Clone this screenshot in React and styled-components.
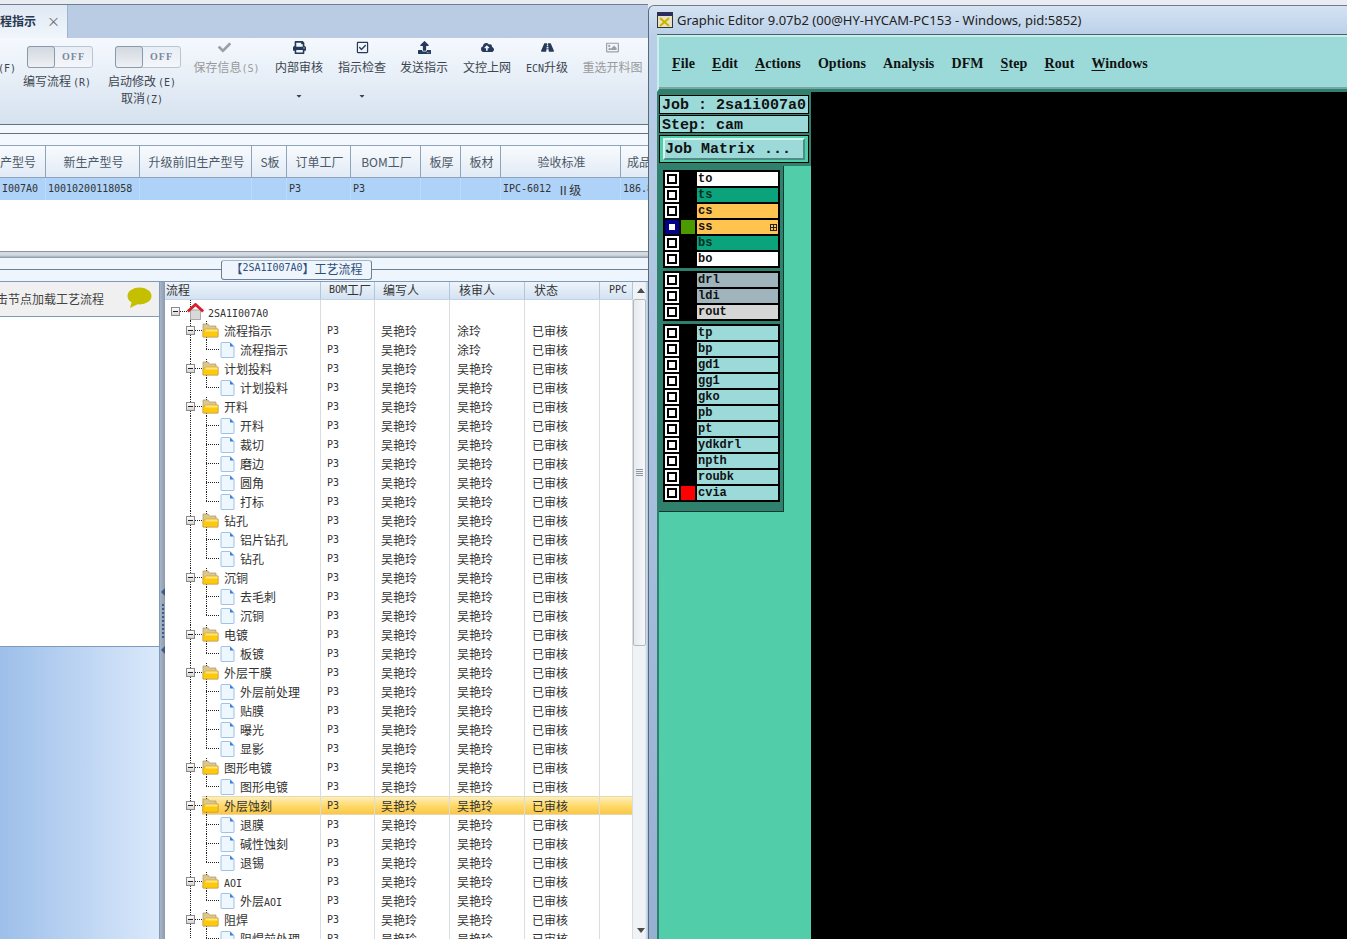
import React from "react";
import styled, { createGlobalStyle } from "styled-components";
import { FaCheck, FaPrint, FaRegCheckSquare, FaUpload, FaCloudUploadAlt, FaRoad, FaRegImage, FaCaretDown } from "react-icons/fa";

const GlobalStyle = createGlobalStyle`
  html, body { margin: 0; padding: 0; background: #e9edf2; }
  * { box-sizing: border-box; }
  body { font-family: "Noto Sans CJK SC", "Liberation Sans", sans-serif; font-size: 12px; color: #333; }
`;

const Desk = styled.div`
  width: 1347px;
  height: 939px;
  display: flex;
  overflow: hidden;
  background: #e9edf2;
`;

const LeftApp = styled.div`
  width: 648px;
  flex: none;
  display: flex;
  flex-direction: column;
  overflow: hidden;
  padding-top: 4px;
`;

const M = styled.span`
  font-family: "DejaVu Sans Mono", "Liberation Mono", monospace;
  font-size: 10px;
  line-height: 1;
  margin-left: ${(p) => p.$gap || 0}px;
`;

const TabStrip = styled.div`
  height: 34px;
  flex: none;
  background: #b9cce4;
  border-top: 1px solid #6f7f91;
  display: flex;
`;

const Tab = styled.div`
  width: 68px;
  display: flex;
  align-items: center;
  justify-content: space-between;
  padding: 0 7px 2px 0;
  background: linear-gradient(#dfe8f3, #f1f6fc);
  border-right: 1px solid #9fb4cf;
  font-weight: 700;
  color: #27384f;
  i { font-style: normal; font-weight: 400; color: #666; font-size: 13px; }
`;

const Ribbon = styled.div`
  height: 87px;
  flex: none;
  display: grid;
  grid-template-columns: 14px 86px 84px 81px 68px 58px 66px 60px 60px 71px;
  background: linear-gradient(#f5f9fe, #d6e2ef);
  border-bottom: 1px solid #66727f;
`;

const Cell = styled.div`
  display: flex;
  flex-direction: column;
  align-items: center;
  white-space: nowrap;
  color: ${(p) => (p.$off ? "#9a9a9a" : "#3d4650")};
`;

const ToolIcon = styled.div`
  height: 18px;
  display: flex;
  align-items: center;
  justify-content: center;
  font-size: 13px;
  color: ${(p) => (p.$off ? "#9aa0a6" : "#253a5a")};
`;

const ToolText = styled.div`
  line-height: 18px;
  margin-top: 2px;
  padding-left: ${(p) => p.$nudge || 0}px;
`;

const FLabel = styled.div`
  line-height: 18px;
  margin-top: 20px;
`;

const Caret = styled.div`
  margin-top: 15px;
  height: 12px;
  font-size: 8px;
  line-height: 12px;
  color: #3d4650;
`;

const Toggle = styled.div`
  width: 66px;
  height: 22px;
  margin: 8px 0 0 ${(p) => p.$shift}px;
  display: flex;
  flex: none;
  border: 1px solid #bac5d1;
  border-radius: 3px;
  background: linear-gradient(#e8eef5, #f3f6fa);
  b {
    flex: 1;
    text-align: center;
    font: 700 10px/19px "Liberation Serif", serif;
    letter-spacing: 1px;
    color: #7789a0;
  }
`;

const Knob = styled.div`
  width: 28px;
  margin: -1px 0 -1px -1px;
  border: 1px solid #8c99a8;
  border-radius: 3px;
  background: linear-gradient(#d3d9e0, #edf0f4);
`;

const ToggleLabel = styled.div`
  line-height: 17px;
  margin-top: 4px;
  text-align: center;
`;

const Gap = styled.div`
  height: 9px;
  flex: none;
  background: #f3f8fe;
  border-bottom: 1px solid #66727f;
`;

const Spacer = styled.div`
  height: 11px;
  flex: none;
  background: #f3f8fe;
`;

const gridCols = "46px 94px 112px 35px 64px 70px 40px 40px 120px 40px";

const HeadRow = styled.div`
  height: 33px;
  flex: none;
  display: grid;
  grid-template-columns: ${gridCols};
  background: linear-gradient(#f8fbfe, #e1eaf5);
  border-top: 1px solid #8fa3ba;
  border-bottom: 1px solid #8fa3ba;
`;

const HeadCell = styled.div`
  display: flex;
  align-items: center;
  justify-content: ${(p) => (p.$clip ? "flex-end" : "center")};
  padding: ${(p) => (p.$clip ? "0 9px 0 0" : "0 0 0 2px")};
  border-right: 1px solid #8fa3ba;
  white-space: nowrap;
  overflow: hidden;
  color: #4c5866;
`;

const DataRow = styled.div`
  height: 22px;
  flex: none;
  display: grid;
  grid-template-columns: ${gridCols};
  background: #aed2f8;
  box-shadow: 0 1px 0 #e4effb;
`;

const DataCell = styled.div`
  display: flex;
  align-items: center;
  padding-left: 2px;
  white-space: pre;
  overflow: hidden;
  border-right: 1px solid #bcdafa;
  color: #333;
`;

const WhiteArea = styled.div`
  height: 51px;
  flex: none;
  background: #fff;
`;

const HSplit = styled.div`
  height: 7px;
  flex: none;
  border-top: 1px solid #8a96a4;
  background: linear-gradient(#d3dae2 0 50%, #8a96a4 100%);
`;

const GroupBar = styled.div`
  height: 24px;
  flex: none;
  padding: 2px 0 0 221px;
  background: linear-gradient(#eef5fd 0 11px, #6f7f91 11px 12px, #eef5fd 12px);
  border-bottom: 1px solid #7f9abb;
`;

const GroupTab = styled.div`
  width: 151px;
  height: 20px;
  display: flex;
  align-items: center;
  justify-content: center;
  padding-bottom: 4px;
  background: #eef5fd;
  border: 1px solid #6f7f91;
  border-top-color: #a9b6c5;
  border-radius: 3px;
  white-space: nowrap;
  color: #2d4f78;
`;

const Lower = styled.div`
  flex: 1;
  min-height: 0;
  display: flex;
`;

const SidePanel = styled.div`
  width: 160px;
  flex: none;
  display: flex;
  flex-direction: column;
  border-right: 1px solid #7f9abb;
  overflow: hidden;
`;

const SideHead = styled.div`
  height: 35px;
  flex: none;
  display: flex;
  align-items: center;
  justify-content: space-between;
  padding: 0 7px 2px 0;
  background: #f0f0f0;
  border-bottom: 1px solid #7f9abb;
  white-space: nowrap;
  color: #444;
  span { margin-left: -4px; }
`;

const SideWhite = styled.div`
  height: 330px;
  flex: none;
  background: #fff;
  border-bottom: 1px solid #7f9abb;
`;

const SideBlue = styled.div`
  flex: 1;
  background: linear-gradient(90deg, #9dbfea, #dbe9fb);
`;

const VSplit = styled.div`
  width: 5px;
  flex: none;
  display: flex;
  flex-direction: column;
  align-items: center;
  padding-top: 306px;
  background: linear-gradient(90deg, #a8b5c6, #8a9ab0);
`;

const SplitArrow = styled.div`
  width: 0;
  height: 0;
  border-top: 4px solid transparent;
  border-bottom: 4px solid transparent;
  border-right: 4px solid #3a5a88;
`;

const SplitDots = styled.div`
  width: 2px;
  height: 34px;
  margin: 8px 0;
  background: repeating-linear-gradient(#3a5a88 0 2px, transparent 2px 4px);
`;

const TreeMain = styled.div`
  flex: 1;
  min-width: 0;
  display: flex;
  flex-direction: column;
  background: #fff;
  overflow: hidden;
`;

const treeCols = "156px 54px 75px 75px 75px 33px";

const TreeHead = styled.div`
  height: 18px;
  flex: none;
  display: grid;
  grid-template-columns: ${treeCols};
  background: linear-gradient(#edf4fb, #d3e2f2);
  border-bottom: 1px solid #c4d2e2;
`;

const TreeHeadCell = styled.div`
  display: flex;
  align-items: center;
  padding: 0 0 2px ${(p) => p.$pad}px;
  border-right: 1px solid #b3c5da;
  white-space: nowrap;
  overflow: hidden;
  color: #333;
`;

const TreeBody = styled.div`
  flex: 1;
  min-height: 0;
  overflow: hidden;
`;

const Row = styled.div`
  height: ${(p) => (p.$root ? 21 : 19)}px;
  display: grid;
  grid-template-columns: ${treeCols};
  ${(p) =>
    p.$selected &&
    `background: linear-gradient(#e9d9a8 0 1px, #fdeebc 1px, #ffd964 55%, #f8c64c 95%, #e9d9a8 95%) no-repeat 37px 0 / calc(100% - 37px) 100%;`}
`;

const guide = (x, stop) =>
  `repeating-linear-gradient(#222 0 1px, transparent 1px 2px) no-repeat ${x}px 0 / 1px ${stop}`;

const TreeCell = styled.div`
  display: flex;
  align-items: center;
  padding-left: ${(p) => p.$indent}px;
  padding-top: ${(p) => (p.$root ? 2 : 0)}px;
  border-right: 1px solid #d9dde2;
  white-space: nowrap;
  color: #333;
  background: ${(p) => p.$guides};
`;

const ValueCell = styled.div`
  display: flex;
  align-items: center;
  padding-left: ${(p) => p.$pad}px;
  border-right: 1px solid #d9dde2;
  white-space: nowrap;
  color: #333;
`;

const Expander = styled.div`
  width: 9px;
  height: 9px;
  flex: none;
  position: relative;
  border: 1px solid #8a8a8a;
  background: linear-gradient(#fff, #d5d5d5);
  &::after {
    content: "";
    position: absolute;
    left: 1px;
    right: 1px;
    top: 3px;
    height: 1px;
    background: #222;
  }
`;

const Dots = styled.div`
  width: ${(p) => p.$w}px;
  height: 1px;
  flex: none;
  background: repeating-linear-gradient(90deg, #222 0 1px, transparent 1px 2px);
`;

const NodeText = styled.span`
  margin-left: ${(p) => p.$gap}px;
`;

const ScrollBar = styled.div`
  width: 15px;
  flex: none;
  display: flex;
  flex-direction: column;
  background: linear-gradient(90deg, #f0f3f6 0 80%, #a9c2e0);
`;

const ScrollButton = styled.div`
  height: 17px;
  flex: none;
  display: flex;
  align-items: center;
  justify-content: center;
  &::after {
    content: "";
    border-left: 4px solid transparent;
    border-right: 4px solid transparent;
    ${(p) => (p.$down ? "border-top" : "border-bottom")}: 5px solid #4d4d4d;
  }
`;

const ScrollThumb = styled.div`
  height: 347px;
  flex: none;
  margin-right: 2px;
  display: flex;
  align-items: center;
  justify-content: center;
  background: linear-gradient(90deg, #e6eaef, #f6f8fa);
  border: 1px solid #b5b9be;
  border-radius: 2px;
  i {
    width: 7px;
    height: 7px;
    background: repeating-linear-gradient(#8e98a3 0 1px, transparent 1px 2px);
  }
`;

const ScrollTrack = styled.div`
  flex: 1;
`;

/* right hand window */
const GraphicWindow = styled.div`
  flex: 1;
  min-width: 0;
  margin-top: 5px;
  display: flex;
  flex-direction: column;
  border-top: 1px solid #6d7c8c;
  border-left: 1px solid #5a6878;
  border-top-left-radius: 6px;
  background: linear-gradient(#d5e3f2, #b9cfe8 30px, #96b0d2);
  padding-left: 8px;
  overflow: hidden;
`;

const TitleBar = styled.div`
  height: 28px;
  flex: none;
  display: flex;
  align-items: center;
  gap: 4px;
  font: 13px "Noto Sans", sans-serif;
  color: #222;
  white-space: nowrap;
`;

const Client = styled.div`
  flex: 1;
  min-height: 0;
  display: flex;
  flex-direction: column;
  background: #000;
  border-top: 1px solid #47625f;
`;

const MenuBar = styled.div`
  height: 57px;
  flex: none;
  display: flex;
  align-items: center;
  gap: 17px;
  padding: 2px 0 0 13px;
  background: #9bdad9;
  border-top: 2px solid #c9eeec;
  border-left: 2px solid #c9eeec;
  border-bottom: 3px solid #2f806c;
  box-shadow: inset 0 -2px 0 #7ba5a4;
  font: 700 14px "Liberation Serif", serif;
  letter-spacing: 0.1px;
  color: #111;
  u { text-underline-offset: 2px; }
`;

const Work = styled.div`
  flex: 1;
  min-height: 0;
  display: flex;
`;

const LeftColumn = styled.div`
  width: 154px;
  flex: none;
  display: flex;
  flex-direction: column;
  background: #2f806c;
  padding: 3px 0 0 2px;
`;

const InfoLine = styled.div`
  width: 150px;
  height: ${(p) => p.$h}px;
  flex: none;
  margin-bottom: 1px;
  padding: 2px 0 0 2px;
  background: #9bdad9;
  border: 1px solid #000;
  font: 700 15px/15px "Liberation Mono", monospace;
  white-space: pre;
  color: #111;
`;

const MatrixGroup = styled.div`
  width: 150px;
  height: 28px;
  flex: none;
  margin-top: 1px;
  padding: 2px 3px;
  border: 1px solid #000;
  background: #52cdaa;
`;

const MatrixButton = styled.div`
  height: 22px;
  background: #9bdad9;
  border: 2px solid;
  border-color: #d5f3f1 #4f8d84 #4f8d84 #d5f3f1;
  font: 700 15px/20px "Liberation Mono", monospace;
  white-space: pre;
  color: #111;
`;

const Lowerside = styled.div`
  flex: 1;
  min-height: 0;
  margin-top: 3px;
  display: flex;
  flex-direction: column;
  align-items: flex-start;
  background: #52cdaa;
`;

const Frame = styled.div`
  width: 125px;
  flex: none;
  display: flex;
  flex-direction: column;
  gap: 3px;
  padding: 4px 3px 9px 4px;
  background: #2f806c;
  border-right: 1px solid #10382e;
  border-bottom: 1px solid #10382e;
`;

const LayerGroup = styled.div`
  display: flex;
  flex-direction: column;
  gap: 2px;
  padding: 2px;
  background: #000;
`;

const LayerRow = styled.div`
  height: 14px;
  display: grid;
  grid-template-columns: 14px 14px 1fr;
  gap: 2px;
`;

const Check = styled.div`
  padding: 2px;
  background: ${(p) => (p.$active ? "#00008b" : "#fff")};
  div {
    width: 10px;
    height: 10px;
    border: 2px solid ${(p) => (p.$active ? "#00008b" : "#000")};
    background: #fff;
  }
`;

const Swatch = styled.div`
  background: ${(p) => p.$color || "#000"};
`;

const LayerName = styled.div`
  display: flex;
  align-items: center;
  justify-content: space-between;
  padding: 1px 1px 0 1px;
  background: ${(p) => p.$color};
  font: 700 12px/13px "Liberation Mono", monospace;
  color: ${(p) => p.$ink || "#111"};
`;

const Canvas = styled.div`
  flex: 1;
  background: #000;
`;

const Folder = () => (
  <svg width="17" height="15" viewBox="0 0 17 15">
    <path d="M1 14 V1 H6 L7.5 3 H14 V6 H16 V14Z" fill="#dcc88f" stroke="#a99560" strokeWidth="0.7" />
    <path d="M4 6 H16 V14 H1 V8Z" fill="#ffc90a" stroke="#c9a24a" strokeWidth="0.7" />
    <rect x="3.5" y="6.5" width="12" height="2" fill="#ffe680" />
  </svg>
);

const Doc = () => (
  <svg width="15" height="16" viewBox="0 0 15 16">
    <path d="M1.5 .5 H10 L14 4.5 V15 Q14 15.5 13 15.5 H2 Q1 15.5 1 15 V1 Z" fill="#eef6fe" stroke="#9cc2e8" />
    <path d="M10 .5 L14 4.5 H10Z" fill="#3b7fdb" />
  </svg>
);

const House = () => (
  <svg width="17" height="17" viewBox="0 0 17 17">
    <rect x="3.5" y="7" width="10" height="9.5" fill="#d8d8d8" stroke="#aaa" />
    <path d="M.8 8.5 L8.5 1.5 L16.2 8.5" fill="none" stroke="#d8202a" strokeWidth="2.8" />
  </svg>
);

const Bubble = () => (
  <svg width="25" height="22" viewBox="0 0 25 22">
    <ellipse cx="12.5" cy="9" rx="12" ry="8.5" fill="#c4bf00" />
    <path d="M5 14 L3 21 L13 16Z" fill="#c4bf00" />
  </svg>
);

const WinIcon = () => (
  <svg width="16" height="16" viewBox="0 0 16 16">
    <rect x=".5" y=".5" width="15" height="15" fill="#e9e3c4" stroke="#333" />
    <rect x="1" y="1" width="14" height="3" fill="#2a2a6a" />
    <path d="M3 6 L12 14 M12 6 L3 14" stroke="#c9b400" strokeWidth="2" />
  </svg>
);

const LayerMark = () => (
  <svg width="7" height="7" viewBox="0 0 7 7">
    <rect x=".5" y=".5" width="6" height="6" fill="none" stroke="#222" />
    <path d="M3.5 1 V6 M1 3.5 H6" stroke="#222" />
  </svg>
);

const tableHead = [
  ["产型号", true],
  ["新生产型号"],
  ["升级前旧生产型号"],
  ["S板"],
  ["订单工厂"],
  ["BOM工厂"],
  ["板厚"],
  ["板材"],
  ["验收标准"],
  ["成品", true],
];

const tools = [
  { icon: <FaCheck />, text: <>保存信息<M>(S)</M></>, off: true, nudge: 4 },
  { icon: <FaPrint />, text: "内部审核", caret: true },
  { icon: <FaRegCheckSquare />, text: "指示检查", caret: true },
  { icon: <FaUpload />, text: "发送指示" },
  { icon: <FaCloudUploadAlt />, text: "文控上网" },
  { icon: <FaRoad />, text: <><M>ECN</M>升级</> },
  { icon: <FaRegImage />, text: "重选开料图", off: true },
];

const tree = [
  ["流程指示", ["流程指示"], "涂玲"],
  ["计划投料", ["计划投料"]],
  ["开料", ["开料", "裁切", "磨边", "圆角", "打标"]],
  ["钻孔", ["铝片钻孔", "钻孔"]],
  ["沉铜", ["去毛刺", "沉铜"]],
  ["电镀", ["板镀"]],
  ["外层干膜", ["外层前处理", "贴膜", "曝光", "显影"]],
  ["图形电镀", ["图形电镀"]],
  ["外层蚀刻", ["退膜", "碱性蚀刻", "退锡"]],
  ["AOI", ["外层AOI"]],
  ["阻焊", ["阻焊前处理"]],
];

const nodeLabel = (s) => {
  const m = s.match(/^([^A-Z]*)([A-Z]+)$/);
  return m ? <>{m[1]}<M>{m[2]}</M></> : s;
};

const Values = ({ checker = "吴艳玲" }) => (
  <>
    <ValueCell $pad={6}><M>P3</M></ValueCell>
    <ValueCell $pad={6}>吴艳玲</ValueCell>
    <ValueCell $pad={7}>{checker}</ValueCell>
    <ValueCell $pad={7}>已审核</ValueCell>
    <ValueCell $pad={0} />
  </>
);

const TreeRows = () => (
  <>
    <Row $root>
      <TreeCell $root $indent={6} $guides={guide(25, "100%")}>
        <Expander />
        <Dots $w={7} />
        <House />
        <NodeText $gap={4}><M>2SA1I007A0</M></NodeText>
      </TreeCell>
      <ValueCell $pad={0} />
      <ValueCell $pad={0} />
      <ValueCell $pad={0} />
      <ValueCell $pad={0} />
      <ValueCell $pad={0} />
    </Row>
    {tree.map(([name, kids, checker]) => (
      <React.Fragment key={name}>
        <Row $selected={name === "外层蚀刻"}>
          <TreeCell $indent={21} $guides={`${guide(25, "100%")}, ${guide(41, "100%")}`}>
            <Expander />
            <Dots $w={7} />
            <Folder />
            <NodeText $gap={5}>{nodeLabel(name)}</NodeText>
          </TreeCell>
          <Values checker={checker} />
        </Row>
        {kids.map((kid, i) => (
          <Row key={kid + i}>
            <TreeCell
              $indent={41}
              $guides={`${guide(25, "100%")}, ${guide(41, i === kids.length - 1 ? "50%" : "100%")}`}
            >
              <Dots $w={14} />
              <Doc />
              <NodeText $gap={5}>{nodeLabel(kid)}</NodeText>
            </TreeCell>
            <Values checker={checker} />
          </Row>
        ))}
      </React.Fragment>
    ))}
  </>
);

const teal = "#9bdad9";
const layers = [
  [
    { name: "to", color: "#fff" },
    { name: "ts", color: "#0aa37c", ink: "#042e23" },
    { name: "cs", color: "#fec44f" },
    { name: "ss", color: "#fec44f", active: true, swatch: "#4a9a00", mark: true },
    { name: "bs", color: "#0aa37c", ink: "#042e23" },
    { name: "bo", color: "#fff" },
  ],
  [
    { name: "drl", color: "#9fb4bd" },
    { name: "ldi", color: "#9fb4bd" },
    { name: "rout", color: "#d6d6d6" },
  ],
  [
    { name: "tp", color: teal },
    { name: "bp", color: teal },
    { name: "gd1", color: teal },
    { name: "gg1", color: teal },
    { name: "gko", color: teal },
    { name: "pb", color: teal },
    { name: "pt", color: teal },
    { name: "ydkdrl", color: teal },
    { name: "npth", color: teal },
    { name: "roubk", color: teal },
    { name: "cvia", color: teal, swatch: "#fe0000" },
  ],
];

export default function App() {
  return (
    <Desk>
      <GlobalStyle />
      <LeftApp>
        <TabStrip>
          <Tab><span>程指示</span><i>×</i></Tab>
        </TabStrip>
        <Ribbon>
          <Cell><FLabel><M>(F)</M></FLabel></Cell>
          <Cell>
            <Toggle $shift={6}><Knob /><b>OFF</b></Toggle>
            <ToggleLabel>编写流程<M $gap={2}>(R)</M></ToggleLabel>
          </Cell>
          <Cell>
            <Toggle $shift={12}><Knob /><b>OFF</b></Toggle>
            <ToggleLabel>启动修改<M $gap={2}>(E)</M><br />取消<M>(Z)</M></ToggleLabel>
          </Cell>
          {tools.map((t, i) => (
            <Cell key={i} $off={t.off}>
              <ToolIcon $off={t.off}>{t.icon}</ToolIcon>
              <ToolText $nudge={t.nudge}>{t.text}</ToolText>
              {t.caret && <Caret><FaCaretDown /></Caret>}
            </Cell>
          ))}
        </Ribbon>
        <Gap />
        <Spacer />
        <HeadRow>
          {tableHead.map(([text, clip]) => (
            <HeadCell key={text} $clip={clip}>{text}</HeadCell>
          ))}
        </HeadRow>
        <DataRow>
          <DataCell><M>I007A0</M></DataCell>
          <DataCell><M>10010200118058</M></DataCell>
          <DataCell />
          <DataCell />
          <DataCell><M>P3</M></DataCell>
          <DataCell><M>P3</M></DataCell>
          <DataCell />
          <DataCell />
          <DataCell><M>IPC-6012 </M>Ⅱ级</DataCell>
          <DataCell><M>186.8</M></DataCell>
        </DataRow>
        <WhiteArea />
        <HSplit />
        <GroupBar>
          <GroupTab>【<M>2SA1I007A0</M>】工艺流程</GroupTab>
        </GroupBar>
        <Lower>
          <SidePanel>
            <SideHead><span>击节点加载工艺流程</span><Bubble /></SideHead>
            <SideWhite />
            <SideBlue />
          </SidePanel>
          <VSplit>
            <SplitArrow />
            <SplitDots />
            <SplitArrow />
          </VSplit>
          <TreeMain>
            <TreeHead>
              <TreeHeadCell $pad={1}>流程</TreeHeadCell>
              <TreeHeadCell $pad={8}><M>BOM</M>工厂</TreeHeadCell>
              <TreeHeadCell $pad={8}>编写人</TreeHeadCell>
              <TreeHeadCell $pad={9}>核审人</TreeHeadCell>
              <TreeHeadCell $pad={9}>状态</TreeHeadCell>
              <TreeHeadCell $pad={9}><M>PPC</M></TreeHeadCell>
            </TreeHead>
            <TreeBody><TreeRows /></TreeBody>
          </TreeMain>
          <ScrollBar>
            <ScrollButton />
            <ScrollThumb><i /></ScrollThumb>
            <ScrollTrack />
            <ScrollButton $down />
          </ScrollBar>
        </Lower>
      </LeftApp>
      <GraphicWindow>
        <TitleBar>
          <WinIcon />
          <span>Graphic Editor 9.07b2 (00@HY-HYCAM-PC153 - Windows, pid:5852)</span>
        </TitleBar>
        <Client>
          <MenuBar>
            <span><u>F</u>ile</span>
            <span><u>E</u>dit</span>
            <span><u>A</u>ctions</span>
            <span>Options</span>
            <span>Analysis</span>
            <span>DFM</span>
            <span><u>S</u>tep</span>
            <span><u>R</u>out</span>
            <span><u>W</u>indows</span>
          </MenuBar>
          <Work>
            <LeftColumn>
              <InfoLine $h={19}>{"Job : 2sa1i007a0"}</InfoLine>
              <InfoLine $h={18}>{"Step: cam"}</InfoLine>
              <MatrixGroup>
                <MatrixButton>{"Job Matrix ..."}</MatrixButton>
              </MatrixGroup>
              <Lowerside>
                <Frame>
                  {layers.map((group, g) => (
                    <LayerGroup key={g}>
                      {group.map((l) => (
                        <LayerRow key={l.name}>
                          <Check $active={l.active}><div /></Check>
                          <Swatch $color={l.swatch} />
                          <LayerName $color={l.color} $ink={l.ink}>
                            {l.name}
                            {l.mark && <LayerMark />}
                          </LayerName>
                        </LayerRow>
                      ))}
                    </LayerGroup>
                  ))}
                </Frame>
              </Lowerside>
            </LeftColumn>
            <Canvas />
          </Work>
        </Client>
      </GraphicWindow>
    </Desk>
  );
}
